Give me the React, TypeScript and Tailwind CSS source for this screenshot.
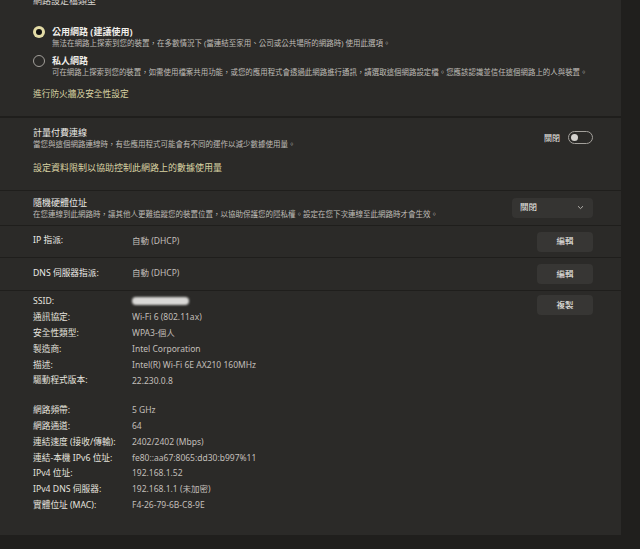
import React from "react";

const font = "font-['Segoe_UI','Noto_Sans','Noto_Sans_CJK_TC',sans-serif]";

const details1 = [
  { label: "SSID:", value: "" },
  { label: "通訊協定:", value: "Wi-Fi 6 (802.11ax)" },
  { label: "安全性類型:", value: "WPA3-個人" },
  { label: "製造商:", value: "Intel Corporation" },
  { label: "描述:", value: "Intel(R) Wi-Fi 6E AX210 160MHz" },
  { label: "驅動程式版本:", value: "22.230.0.8" },
];

const details2 = [
  { label: "網路頻帶:", value: "5 GHz" },
  { label: "網路通道:", value: "64" },
  { label: "連結速度 (接收/傳輸):", value: "2402/2402 (Mbps)" },
  { label: "連結-本機 IPv6 位址:", value: "fe80::aa67:8065:dd30:b997%11" },
  { label: "IPv4 位址:", value: "192.168.1.52" },
  { label: "IPv4 DNS 伺服器:", value: "192.168.1.1 (未加密)" },
  { label: "實體位址 (MAC):", value: "F4-26-79-6B-C8-9E" },
];

const Btn = ({ children }: { children: React.ReactNode }) => (
  <button className="w-[56px] h-[20px] rounded-[4px] bg-[#373634] text-[#f0eeea] text-[8.5px] leading-none flex items-center justify-center">
    {children}
  </button>
);

const Radio = ({ on }: { on?: boolean }) =>
  on ? (
    <span className="w-[12px] h-[12px] rounded-full bg-[#e3dba6] flex items-center justify-center shrink-0">
      <span className="w-[6px] h-[6px] rounded-full bg-[#121110]" />
    </span>
  ) : (
    <span className="w-[12px] h-[12px] rounded-full border border-[#a29f9a] shrink-0" />
  );

const DetailRow = ({ label, value }: { label: string; value: string }) => (
  <div className="flex h-[15.8px] items-center">
    <span className="w-[99px] text-[#e4e2de] text-[8.7px]">{label}</span>
    {label === "SSID:" ? (
      <span className="w-[57px] h-[8px] rounded-full bg-[#d9d8d6] blur-[1px] -mt-[2px]" />
    ) : (
      <span className="text-[#c2bfba] text-[8.5px]">{value}</span>
    )}
  </div>
);

export default function App() {
  return (
    <div className={`${font} w-[640px] h-[549px] bg-[#201f1d] overflow-hidden`}>
      <div className="w-[621px] h-[535px] bg-[#2b2a28] flex flex-col">
        {/* profile type */}
        <div className="h-[116px] pl-[33px] pr-[28px] flex flex-col">
          <div className="-mt-[5px] h-[12px] leading-[12px] text-[9px] text-[#d6d3ce]">網路設定檔類型</div>
          <div className="mt-[19px] flex gap-[7px]">
            <Radio on />
            <div>
              <div className="leading-[12px] text-[9px] font-bold text-[#f0eeea]">公用網路 (建議使用)</div>
              <div className="leading-[11px] text-[7.5px] text-[#bfbcb7]">
                無法在網路上探索到您的裝置，在多數情況下 (當連結至家用、公司或公共場所的網路時) 使用此選項。
              </div>
            </div>
          </div>
          <div className="mt-[6px] flex gap-[7px]">
            <Radio />
            <div>
              <div className="leading-[12px] text-[9px] font-bold text-[#f0eeea]">私人網路</div>
              <div className="leading-[11px] text-[7.45px] text-[#bfbcb7] whitespace-nowrap">
                可在網路上探索到您的裝置，如需使用檔案共用功能，或您的應用程式會透過此網路進行通訊，請選取這個網路設定檔。您應該認識並信任這個網路上的人與裝置。
              </div>
            </div>
          </div>
          <div className="mt-[10px] leading-[12px] text-[8.7px] text-[#d9d3a3]">進行防火牆及安全性設定</div>
        </div>

        {/* metered */}
        <div className="h-[74px] border-t-2 border-[#1f1e1c] pl-[33px] pr-[28px] pt-[9px] flex justify-between">
          <div>
            <div className="leading-[12px] text-[9px] text-[#ecebe7]">計量付費連線</div>
            <div className="leading-[11px] text-[7.5px] text-[#bfbcb7]">當您與這個網路連線時，有些應用程式可能會有不同的運作以減少數據使用量。</div>
            <div className="mt-[11px] leading-[13px] text-[9px] text-[#d9d3a3]">設定資料限制以協助控制此網路上的數據使用量</div>
          </div>
          <div className="flex items-center gap-[8px] h-[13px] mt-[4px]">
            <span className="text-[8px] text-[#ecebe7]">關閉</span>
            <span className="w-[25px] h-[13px] rounded-full border border-[#a3a09b] flex items-center pl-[2px]">
              <span className="w-[7px] h-[7px] rounded-full bg-[#d4d2ce]" />
            </span>
          </div>
        </div>

        {/* random hw */}
        <div className="h-[35px] border-t-1 border-[#1f1e1c] pl-[33px] pr-[28px] flex items-center justify-between">
          <div className="mt-[1px]">
            <div className="leading-[12px] text-[9px] text-[#ecebe7]">隨機硬體位址</div>
            <div className="leading-[11px] text-[7.5px] text-[#bfbcb7]">在您連線到此網路時，讓其他人更難追蹤您的裝置位置，以協助保護您的隱私權。設定在您下次連線至此網路時才會生效。</div>
          </div>
          <div className="w-[81px] h-[20px] rounded-[4px] bg-[#353432] flex items-center justify-between pl-[8px] pr-[9px] -mt-[1px]">
            <span className="text-[8.5px] text-[#ecebe7]">關閉</span>
            <svg width="7" height="5" viewBox="0 0 7 5" fill="none">
              <path d="M1 1.2 3.5 3.6 6 1.2" stroke="#bdbab5" strokeWidth="0.9" />
            </svg>
          </div>
        </div>

        {/* ip */}
        <div className="h-[32px] border-t-1 border-[#1f1e1c] pl-[33px] pr-[28px] flex items-center justify-between">
          <div className="flex items-center -mt-[1px]">
            <span className="w-[99px] text-[8.7px] text-[#ecebe7]">IP 指派:</span>
            <span className="text-[8.5px] text-[#c2bfba]">自動 (DHCP)</span>
          </div>
          <Btn>編輯</Btn>
        </div>

        {/* dns */}
        <div className="h-[33px] border-t-1 border-[#1f1e1c] pl-[33px] pr-[28px] flex items-center justify-between">
          <div className="flex items-center -mt-[1px]">
            <span className="w-[99px] text-[8.7px] text-[#ecebe7]">DNS 伺服器指派:</span>
            <span className="text-[8.5px] text-[#c2bfba]">自動 (DHCP)</span>
          </div>
          <Btn>編輯</Btn>
        </div>

        {/* details */}
        <div className="flex-1 border-t-1 border-[#1f1e1c] pl-[33px] pr-[28px] pt-[3px] flex justify-between">
          <div className="flex flex-col">
            {details1.map((d) => (
              <DetailRow key={d.label} {...d} />
            ))}
            <div className="h-[14px]" />
            {details2.map((d) => (
              <DetailRow key={d.label} {...d} />
            ))}
          </div>
          <div className="pt-[1px]">
            <Btn>複製</Btn>
          </div>
        </div>
      </div>
    </div>
  );
}
